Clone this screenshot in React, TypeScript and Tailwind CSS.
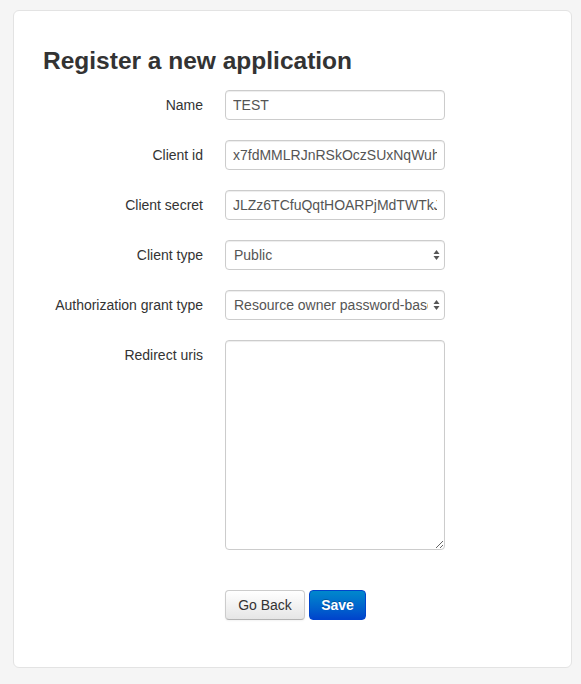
type FieldProps = {
  label: string;
  children: React.ReactNode;
};

function Field({ label, children }: FieldProps) {
  return (
    <div className="flex items-start mb-5">
      <label className="w-[160px] shrink-0 pt-[5px] text-right text-[14px] leading-[20px] text-[#333]">
        {label}
      </label>
      <div className="ml-[22px]">{children}</div>
    </div>
  );
}

const inputCls =
  "block w-[220px] h-[30px] px-[7px] text-[14px] text-[#555] bg-white border border-[#ccc] rounded-[4px] shadow-[inset_0_1px_1px_rgba(0,0,0,0.075)] outline-none";

function SelectBox({ value, options }: { value: string; options: string[] }) {
  return (
    <div className="relative w-[220px]">
      <select defaultValue={value} className={`${inputCls} appearance-none pr-[16px] pl-[8px]`}>
        {options.map((o) => (
          <option key={o}>{o}</option>
        ))}
      </select>
      <svg
        className="absolute right-[5px] top-[9px] pointer-events-none"
        width="7"
        height="12"
        viewBox="0 0 7 12"
        aria-hidden="true"
      >
        <path d="M3.5 1 L6.5 5 L0.5 5 Z" fill="#555" />
        <path d="M3.5 11 L6.5 7 L0.5 7 Z" fill="#555" />
      </svg>
    </div>
  );
}

export default function App() {
  return (
    <div className="min-h-[684px] bg-[#f5f5f5] pt-[10px] pl-[13px] font-['Liberation_Sans',Arial,sans-serif]">
      <div className="w-[559px] h-[658px] bg-white border border-[#e3e3e3] rounded-[6px] px-[29px] pt-[33px]">
        <h1 className="text-[24.5px] leading-[34px] font-bold text-[#333] mb-[12px]">
          Register a new application
        </h1>
        <form onSubmit={(e) => e.preventDefault()}>
          <Field label="Name">
            <input className={inputCls} defaultValue="TEST" />
          </Field>
          <Field label="Client id">
            <input className={inputCls} defaultValue="x7fdMMLRJnRSkOczSUxNqWuhQzPbTvL8aG" />
          </Field>
          <Field label="Client secret">
            <input className={inputCls} defaultValue="JLZz6TCfuQqtHOARPjMdTWTkJpX2eN" />
          </Field>
          <Field label="Client type">
            <SelectBox value="Public" options={["Confidential", "Public"]} />
          </Field>
          <Field label="Authorization grant type">
            <SelectBox
              value="Resource owner password-based"
              options={[
                "Authorization code",
                "Implicit",
                "Resource owner password-based",
                "Client credentials",
              ]}
            />
          </Field>
          <Field label="Redirect uris">
            <textarea className="block w-[220px] h-[210px] px-[7px] py-[4px] text-[14px] text-[#555] bg-white border border-[#ccc] rounded-[4px] shadow-[inset_0_1px_1px_rgba(0,0,0,0.075)] outline-none" />
          </Field>
          <div className="flex gap-[4px] ml-[182px] mt-[40px]">
            <button
              type="button"
              className="w-[80px] h-[30px] text-[14px] text-[#333] border border-[#ccc] border-b-[#b3b3b3] rounded-[4px] bg-gradient-to-b from-white to-[#e6e6e6] shadow-[inset_0_1px_0_rgba(255,255,255,0.2),0_1px_2px_rgba(0,0,0,0.05)]"
            >
              Go Back
            </button>
            <button
              type="submit"
              className="w-[57px] h-[30px] text-[14px] font-bold text-white border border-[#0044cc] rounded-[4px] bg-gradient-to-b from-[#0088cc] to-[#0044cc] [text-shadow:0_-1px_0_rgba(0,0,0,0.25)]"
            >
              Save
            </button>
          </div>
        </form>
      </div>
    </div>
  );
}
